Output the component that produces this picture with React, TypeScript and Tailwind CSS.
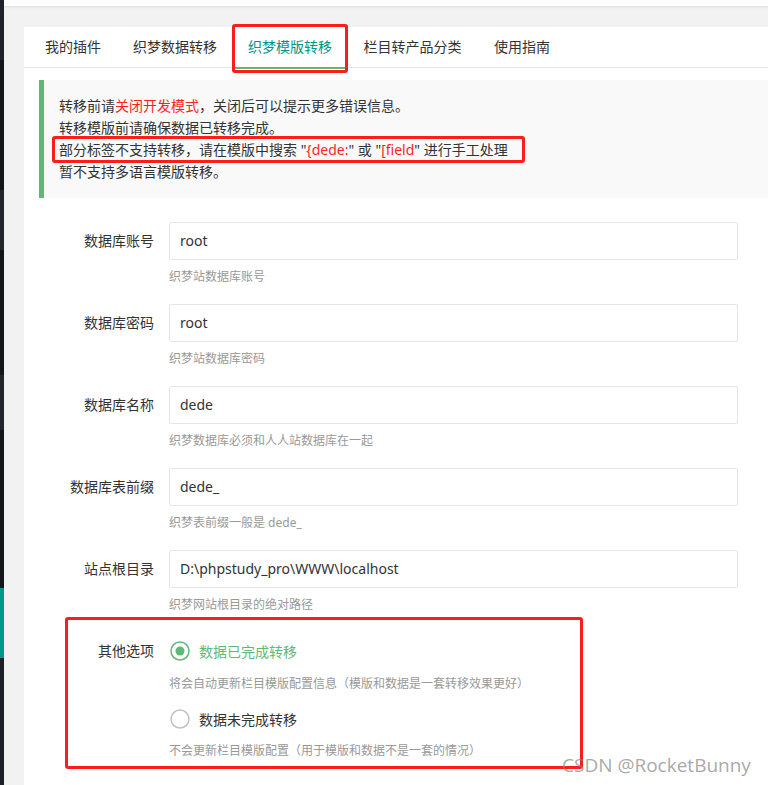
import React from 'react';

const font = { fontFamily: '"Noto Sans", "Noto Sans CJK SC", sans-serif' };

const tabs = [
  { label: '我的插件', w: 'w-[88px]' },
  { label: '织梦数据转移', w: 'w-[116px]' },
  { label: '织梦模版转移', w: 'w-[114px]', active: true },
  { label: '栏目转产品分类', w: 'w-[131px]' },
  { label: '使用指南', w: 'w-[88px]' },
];

const fields = [
  { label: '数据库账号', value: 'root', help: '织梦站数据库账号' },
  { label: '数据库密码', value: 'root', help: '织梦站数据库密码' },
  { label: '数据库名称', value: 'dede', help: '织梦数据库必须和人人站数据库在一起' },
  { label: '数据库表前缀', value: 'dede_', help: '织梦表前缀一般是 dede_' },
  { label: '站点根目录', value: 'D:\\phpstudy_pro\\WWW\\localhost', help: '织梦网站根目录的绝对路径' },
];

function Radio({ checked }: { checked?: boolean }) {
  return (
    <svg width="20" height="20" viewBox="0 0 20 20" className="shrink-0">
      <circle cx="10" cy="10" r="9" fill="#fff" stroke={checked ? '#5FB878' : '#c2c2c2'} strokeWidth="1.5" />
      {checked && <circle cx="10" cy="10" r="4.5" fill="#5FB878" />}
    </svg>
  );
}

function SideStrip() {
  return (
    <div className="w-[4px] shrink-0 flex flex-col">
      <div className="h-[60px] bg-[#202227]" />
      <div className="h-[130px] bg-[#141519]" />
      <div className="h-[60px] bg-[#23252b]" />
      <div className="h-[125px] bg-[#141519]" />
      <div className="h-[55px] bg-[#23252b]" />
      <div className="h-[158px] bg-[#141519]" />
      <div className="h-[70px] bg-[#009688]" />
      <div className="flex-1 bg-[#1e2026]" />
    </div>
  );
}

export default function App() {
  return (
    <div className="relative w-[768px] h-[785px] overflow-hidden bg-[#f2f2f2] flex text-[#333]" style={font}>
      <SideStrip />
      <div className="flex-1 flex flex-col min-w-0">
        <div className="h-[7px] bg-white border-b border-[#e4e4e4] shadow-[0_1px_2px_rgba(0,0,0,0.04)]" />
        <div className="flex-1 pt-[20px] pl-[20px] flex flex-col">
          <div className="flex-1 bg-white flex flex-col">
            {/* tabs */}
            <ul className="flex h-[41px] pl-[5px] border-b border-[#e6e6e6] text-[14px]">
              {tabs.map((t) => (
                <li
                  key={t.label}
                  className={`relative ${t.w} text-center leading-[40px] ${t.active ? 'text-[#009688]' : 'text-[#333]'}`}
                >
                  {t.label}
                  {t.active && <span className="absolute left-0 right-0 bottom-[-2px] h-[2px] bg-[#5FB878]" />}
                </li>
              ))}
            </ul>

            <div className="pl-[15px] pt-[12px]">
              {/* tip */}
              <div className="border-l-[5px] border-[#5FB878] bg-[#f9f9f9] py-[15px] pl-[15px] text-[14px] leading-[22px]">
                <p>
                  转移前请<span className="text-[#ff1f1f]">关闭开发模式</span>，关闭后可以提示更多错误信息。
                </p>
                <p>转移模版前请确保数据已转移完成。</p>
                <p>
                  部分标签不支持转移，请在模版中搜索 "<span className="text-[#ff1f1f]">{'{dede:'}</span>" 或 "
                  <span className="text-[#ff1f1f]">[field</span>" 进行手工处理
                </p>
                <p>暂不支持多语言模版转移。</p>
              </div>

              {/* form */}
              <div className="ml-[20px] mt-[24px] text-[14px]">
                {fields.map((f) => (
                  <div key={f.label} className="flex pb-[17px]">
                    <label className="w-[110px] shrink-0 pr-[15px] text-right leading-[38px] h-[38px]">{f.label}</label>
                    <div className="flex-1 mr-[30px]">
                      <div className="h-[38px] border border-[#e6e6e6] rounded-[2px] pl-[10px] leading-[36px] text-[14px] text-[#333]">
                        {f.value}
                      </div>
                      <div className="pt-[7px] leading-[20px] text-[12px] text-[#999]">{f.help}</div>
                    </div>
                  </div>
                ))}

                <div className="flex">
                  <label className="w-[110px] shrink-0 pr-[15px] text-right leading-[38px] h-[38px]">其他选项</label>
                  <div className="flex-1 mr-[30px]">
                    <div className="h-[38px] flex items-center gap-[9px] pl-[1px] text-[#5FB878]">
                      <Radio checked />
                      <span>数据已完成转移</span>
                    </div>
                    <div className="pt-[4px] pb-[6px] leading-[20px] text-[12px] text-[#999]">
                      将会自动更新栏目模版配置信息（模版和数据是一套转移效果更好）
                    </div>
                    <div className="h-[38px] flex items-center gap-[9px] pl-[1px]">
                      <Radio />
                      <span>数据未完成转移</span>
                    </div>
                    <div className="pt-[3px] leading-[20px] text-[12px] text-[#999]">
                      不会更新栏目模版配置（用于模版和数据不是一套的情况）
                    </div>
                  </div>
                </div>
              </div>
            </div>
          </div>
        </div>
      </div>

      {/* annotation boxes */}
      <div className="absolute left-[232px] top-[24px] w-[116px] h-[49px] border-[3px] border-[#fe1c1c] rounded-[3px]" />
      <div className="absolute left-[52px] top-[136px] w-[473px] h-[27px] border-[3px] border-[#fe1c1c] rounded-[3px]" />
      <div className="absolute left-[65px] top-[617px] w-[518px] h-[152px] border-[3px] border-[#fe1c1c] rounded-[3px]" />

      <div
        className="absolute left-[562px] top-[751px] text-[19px] leading-[28px] text-[rgba(130,130,130,0.7)]"
        style={{ fontFamily: '"Open Sans", sans-serif' }}
      >
        CSDN @RocketBunny
      </div>
    </div>
  );
}
